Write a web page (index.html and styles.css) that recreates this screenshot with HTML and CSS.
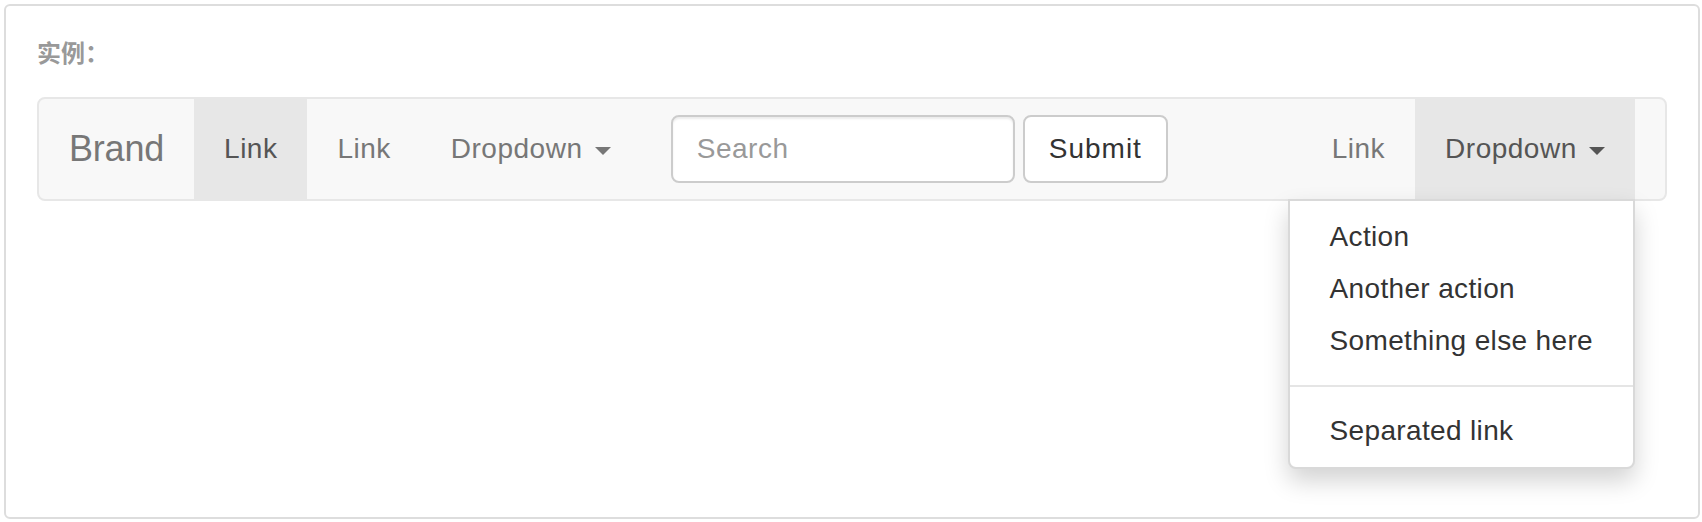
FILE: index.html
```html
<!DOCTYPE html>
<html lang="zh-CN">
<head>
<meta charset="utf-8">
<title>Navbar</title>
<link rel="stylesheet" href="styles.css">
</head>
<body>
<div class="example">
  <div class="example-title">实例：</div>
  <nav class="navbar">
    <a class="brand" href="#">Brand</a>
    <ul class="nav">
      <li class="active"><a href="#">Link</a></li>
      <li><a href="#">Link</a></li>
      <li><a href="#">Dropdown <span class="caret"></span></a></li>
    </ul>
    <form class="navbar-form">
      <input class="form-control" type="text" placeholder="Search">
      <button class="btn" type="button">Submit</button>
    </form>
    <ul class="nav nav-right">
      <li><a href="#">Link</a></li>
      <li class="dropdown active"><a href="#">Dropdown <span class="caret"></span></a>
        <ul class="dropdown-menu">
          <li><a href="#">Action</a></li>
          <li><a href="#">Another action</a></li>
          <li><a href="#">Something else here</a></li>
          <li class="divider"></li>
          <li><a href="#">Separated link</a></li>
        </ul>
      </li>
    </ul>
  </nav>
</div>
</body>
</html>
```
FILE: styles.css
```css
* {
  box-sizing: border-box;
}

body {
  margin: 0;
  background: #fff;
  font-family: "Liberation Sans", Arial, sans-serif;
}

.example {
  margin: 4px 2px 0 4px;
  height: 515px;
  border: 2px solid #ddd;
  border-radius: 6px;
  padding: 31px 31px 0;
}

.example-title {
  font-family: "Noto Sans CJK SC", sans-serif;
  font-size: 24px;
  line-height: 30px;
  font-weight: bold;
  color: #999;
}

.navbar {
  display: flex;
  align-items: flex-start;
  height: 104px;
  margin-top: 30px;
  padding: 0 30px 0 0;
  background: #f8f8f8;
  border: 2px solid #e7e7e7;
  border-radius: 8px;
}

.brand {
  display: block;
  height: 100px;
  padding: 30px;
  font-size: 36px;
  line-height: 40px;
  letter-spacing: -0.2px;
  color: #777;
  text-decoration: none;
}

.nav {
  display: flex;
  list-style: none;
  margin: 0;
  padding: 0;
}

.nav > li > a {
  display: block;
  padding: 30px;
  font-size: 28px;
  line-height: 40px;
  letter-spacing: 0.5px;
  color: #777;
  text-decoration: none;
  white-space: nowrap;
}

.nav > li.active > a {
  background: #e7e7e7;
  color: #555;
}

.caret {
  display: inline-block;
  width: 0;
  height: 0;
  margin-left: 4px;
  vertical-align: middle;
  border-top: 8px solid;
  border-left: 8px solid transparent;
  border-right: 8px solid transparent;
}

.navbar-form {
  display: flex;
  gap: 8px;
  margin: 16px 0 0;
  padding: 0 30px;
}

.form-control {
  width: 344px;
  height: 68px;
  padding: 12px 24px;
  font-family: "Liberation Sans", Arial, sans-serif;
  font-size: 28px;
  line-height: 40px;
  letter-spacing: 0.5px;
  color: #555;
  background: #fff;
  border: 2px solid #ccc;
  border-radius: 8px;
  box-shadow: inset 0 2px 2px rgba(0, 0, 0, 0.075);
  outline: none;
}

.form-control::placeholder {
  color: #999;
}

.btn {
  height: 68px;
  padding: 12px 24px;
  font-family: "Liberation Sans", Arial, sans-serif;
  font-size: 28px;
  line-height: 40px;
  letter-spacing: 1px;
  color: #333;
  background: #fff;
  border: 2px solid #ccc;
  border-radius: 8px;
}

.nav-right {
  margin-left: auto;
}

.dropdown {
  position: relative;
}

.dropdown-menu {
  position: absolute;
  top: 100%;
  right: 0;
  z-index: 10;
  min-width: 320px;
  margin: 0;
  padding: 10px 0;
  list-style: none;
  background: #fff;
  border: 2px solid rgba(0, 0, 0, 0.15);
  border-radius: 0 0 8px 8px;
  box-shadow: 0 12px 24px rgba(0, 0, 0, 0.175);
}

.dropdown-menu a {
  display: block;
  padding: 6px 40px;
  font-size: 28px;
  line-height: 40px;
  letter-spacing: 0.35px;
  color: #333;
  text-decoration: none;
  white-space: nowrap;
}

.dropdown-menu .divider {
  height: 2px;
  margin: 18px 0;
  background: #e5e5e5;
}
```
